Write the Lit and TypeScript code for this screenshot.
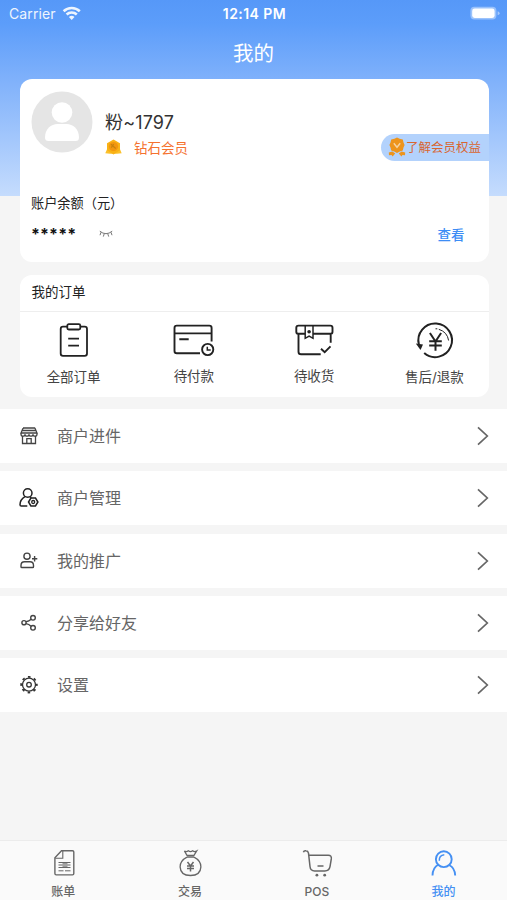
import { LitElement, html, svg, css } from "lit";
import { customElement, property } from "lit/decorators.js";

type Glyph = { w: number; h: number; art: unknown };

const glyphs: Record<string, Glyph> = {
  wifi: {
    w: 20, h: 16,
    art: svg`<g fill="none" stroke="#fff" stroke-width="2.6"><path d="M1.6 5.2a11.8 11.8 0 0 1 16.2 0"/><path d="M4.6 8.500a7.4 7.4 0 0 1 10.2 0"/></g><path fill="#fff" d="M9.7 14 6.9 11.1a4.1 4.1 0 0 1 5.6 0z"/>`,
  },
  battery: {
    w: 30, h: 16,
    art: svg`<rect x=".4" y=".8" width="26" height="12.8" rx="4" fill="#fff" opacity=".4"/><rect x="2.2" y="2.5" width="22.400" height="9.400" rx="2.400" fill="#fff"/><path d="M27.600 5.200v4q2-.6 2-2t-2-2" fill="#fff" opacity=".45"/>`,
  },
  avatar: {
    w: 62, h: 62,
    art: svg`<circle cx="31" cy="31" r="30.5" fill="#e5e5e5"/><circle cx="31" cy="21.5" r="10.3" fill="#fff"/><path fill="#fff" d="M14 46.5c0-8.5 6-13.5 12.500-13.500h9c6.500 0 12.500 5 12.500 13.500q0 3.500-3.500 3.500h-27q-3.500 0-3.500-3.500z"/>`,
  },
  medal: {
    w: 17, h: 16,
    art: svg`<path fill="#fbc12c" d="M3 8 .3 14.200l4.700.6h7l4.700-.6L14 8"/><path fill="#f9b216" d="M8.500 .6 15 4.200v7L8.500 15.600 2 11.200v-7z"/><circle cx="8.500" cy="7.500" r="4.600" fill="#f2960f"/><path d="M6 5.300l4.700 4.200M6.300 8.600l2.400-3.400" stroke="#c8820c" stroke-width="1.200" fill="none"/>`,
  },
  award: {
    w: 18, h: 20,
    art: svg`<path fill="#ed941c" d="M9 .6 11.600 1.800l3.200.8.700 2.800 1.100 2.600-1.100 2.600-.7 3-3 .9L9 16l-2.800-1.500-3-.9-.7-3L1.400 8l1.100-2.600.7-2.800 3.200-.8z"/><path fill="#ed941c" d="M.8 15.500l3.600-1 2.800 2-2.600 3-1.100-1.500-2.500.2zM17.200 15.500l-3.600-1-2.800 2 2.600 3 1.100-1.500 2.500.2z"/><path d="M5.800 6.300 9 10.300l3.200-4" stroke="#f6d3a2" stroke-width="1.400" fill="none"/>`,
  },
  lashes: {
    w: 14, h: 8,
    art: svg`<path d="M.8 1.200Q7 6.200 13.200 1.200M2 2.300 1 5.200M5.200 3.900 4.300 6.600M8.800 3.900l.9 2.700M12 2.300 13 5.200" stroke="#666" stroke-width=".9" fill="none"/>`,
  },
  orders: {
    w: 40, h: 40,
    art: svg`<g fill="none" stroke="#222" stroke-width="1.8"><path d="M13 6.700H9q-2.300 0-2.300 2.300v24.500q0 2.300 2.300 2.300h21.700q2.300 0 2.300-2.300V9q0-2.300-2.300-2.300h-4.400"/><rect x="13.300" y="4.200" width="13" height="5.300" rx="1.500"/><path d="M14.200 18.700H25M14.200 25.700H25"/></g>`,
  },
  pay: {
    w: 48, h: 40,
    art: svg`<g fill="none" stroke="#222" stroke-width="1.900"><path d="M30 33.200H6.800q-2.300 0-2.300-2.300V7.900q0-2.300 2.300-2.300h32.500q2.300 0 2.300 2.300v13.500M4.500 13.400h37M9.300 19.200h9.400"/><circle cx="37.700" cy="29.500" r="5.600"/><path d="M37.300 26.700v3.300h3.400" stroke-width="1.500"/></g>`,
  },
  receive: {
    w: 48, h: 40,
    art: svg`<g fill="none" stroke="#222" stroke-width="1.900"><path d="M15 13.700H8q-1.700 0-1.700-2V7.800q0-2.200 2.200-2.200h31.800q2.200 0 2.200 2.200v3.900q0 2-1.700 2H23M8.500 13.700v18q0 2.600 2.600 2.600h19.600M40.700 13.700v9"/><path d="M15.200 5.600v12.700l3.900-2.300 3.900 2.300V5.600" stroke-width="1.500"/><path d="M31 28.700l3.700 3.500 5.800-5.800"/></g><circle cx="19.100" cy="11.800" r="1.800" fill="#222"/>`,
  },
  refund: {
    w: 50, h: 40,
    art: svg`<g fill="none" stroke="#222" stroke-width="2"><path d="M9.900 24.500A16.800 16.800 0 1 1 15.200 33"/><path d="M20.900 13 26.500 21.500l5.600-8.500M26.500 21.500V30.800M20.200 21.300h12.600M20.200 25.500h12.600"/><path d="M29.800 9.300Q38.300 12 39.600 20.500" stroke-width="1"/><path d="M26.500 8.800h1.800" stroke-width="1"/></g><path fill="#222" d="M6.800 23.500l7.200.9-2.500 5.600z"/>`,
  },
  store: {
    w: 20, h: 20,
    art: svg`<g fill="none" stroke="#444" stroke-width="1.300"><path d="M4 2h12.200M4 2.200 2 7h16l-2-4.800M3.400 4.500h13.200M2 7v1.300q0 1.900 2 1.900t2-1.900q0 1.900 2 1.900t2-1.900q0 1.900 2 1.900t2-1.900q0 1.900 2 1.900t2-1.900V7M3.500 10v7.500h13V10M7.800 17.500v-4.800h4.400v4.800"/></g>`,
  },
  manage: {
    w: 22, h: 22,
    art: svg`<g fill="none" stroke="#222" stroke-width="1.500"><circle cx="9.700" cy="6" r="4.300"/><path d="M7 9.600Q2 12.500 2 17.700q0 1.300 1.300 1.300h6M12 9.800l1.300.9"/><path d="M12.900 11h4.600l2.400 4-2.400 4h-4.600l-2.400-4z" stroke-width="1.500"/><circle cx="15.200" cy="15" r="1.500" stroke-width="1.300"/></g>`,
  },
  promote: {
    w: 20, h: 20,
    art: svg`<g fill="none" stroke="#444" stroke-width="1.400"><circle cx="8" cy="5.200" r="3.100"/><path d="M2 15.700v-1.300q0-3.700 3.500-3.700h5.500q3.500 0 3.500 3.700v1.300q0 .8-.8.800H2.800q-.8 0-.8-.8zM13 7.800h5.300M15.600 5.100v5.400"/></g>`,
  },
  share: {
    w: 20, h: 20,
    art: svg`<g fill="none" stroke="#444" stroke-width="1.400"><circle cx="5" cy="9.700" r="2.100"/><circle cx="14" cy="4.800" r="2.300"/><circle cx="14" cy="14.800" r="2.300"/><path d="M7 8.800Q10 8.500 12.200 6.300M7 10.600q3 .4 5 2.700"/></g>`,
  },
  settings: {
    w: 20, h: 20,
    art: svg`<g fill="none" stroke="#333"><circle cx="10" cy="9.700" r="6.500" stroke-width="1.300"/><circle cx="10" cy="9.700" r="7.800" stroke-width="1.800" stroke-dasharray="2.600 3.526" stroke-dashoffset="1.300"/><circle cx="10" cy="9.700" r="2.300" stroke-width="1.300"/></g>`,
  },
  chevron: {
    w: 12, h: 20,
    art: svg`<path d="M1 1.300 10.300 10 1 18.700" fill="none" stroke="#666" stroke-width="1.700"/>`,
  },
  bill: {
    w: 30, h: 30,
    art: svg`<g fill="none" stroke="#666" stroke-width="1.400"><path d="M13.500 2.800h11q1.300 0 1.300 1.300v21.500q0 1.300-1.300 1.300H8.200q-1.300 0-1.300-1.300V9.800z"/><path d="M14.800 3v7.200H7.200" stroke-width="1.100"/><path d="M10.500 14.500h12M10.500 17h12M10.500 19.500h12M10.500 22.800h5M17 22.800h5.500" stroke-width="1"/><path d="M14.500 15.700h5M14.500 18.300h5" stroke="#999"/></g>`,
  },
  trade: {
    w: 30, h: 30,
    art: svg`<g fill="none" stroke="#666" stroke-width="1.300"><path d="M12 7.300 9.400 3q2 1.200 3.900-.2 2.200 1.500 4.400 0 1.800 1.400 3.900.2L19 7.300zM12 9h7"/><path d="M12 9.200Q5.100 12.800 5.100 18.900 5.500 27.500 15.500 27.500t10.400-8.600Q25.900 12.800 19 9.200"/><path d="M12.500 14l3 4 3-4M15.500 18v5.500M12 18h7M12 20.500h7" stroke-width="1.500"/></g>`,
  },
  cart: {
    w: 32, h: 30,
    art: svg`<g fill="none" stroke="#666" stroke-width="1.500"><path d="M2.400 4.300Q2.900 2.300 5 2.700q2 .2 2.500 2.400L9 18.500q.4 4.400 4.600 4.400h10.200q4.400 0 5.200-4.300l1.300-7.700q.5-3.700-3-3.700H8"/><path d="M16.500 18h6"/></g><circle cx="15.900" cy="27.200" r="1.400" fill="#666"/><circle cx="23.700" cy="27.200" r="1.400" fill="#666"/>`,
  },
  me: {
    w: 30, h: 30,
    art: svg`<g fill="none" stroke="#4590f3" stroke-width="1.900"><circle cx="14.800" cy="11.200" r="7.900"/><path d="M9.500 16.500Q3.700 19.500 3.500 27.500M20 17q5.800 2.500 6.200 10.500"/><path d="M10.300 12.700Q10 7.200 15.300 6.700" stroke-width="1.500"/></g>`,
  },
};

@customElement("line-icon")
class LineIcon extends LitElement {
  @property() name = "";
  static styles = css`
    :host { display: block; flex: none; }
    .art { display: block; }
  `;
  render() {
    const g = glyphs[this.name];
    return html`<svg class="art" width=${g.w} height=${g.h} viewBox="0 0 ${g.w} ${g.h}">${g.art}</svg>`;
  }
}

const orders = [
  { icon: "orders", label: "全部订单", low: true },
  { icon: "pay", label: "待付款", low: false },
  { icon: "receive", label: "待收货", low: false },
  { icon: "refund", label: "售后/退款", low: true },
];

const menu = [
  { icon: "store", label: "商户进件" },
  { icon: "manage", label: "商户管理" },
  { icon: "promote", label: "我的推广" },
  { icon: "share", label: "分享给好友" },
  { icon: "settings", label: "设置" },
];

const tabs = [
  { icon: "bill", label: "账单" },
  { icon: "trade", label: "交易" },
  { icon: "cart", label: "POS" },
  { icon: "me", label: "我的" },
];

@customElement("app-root")
class AppRoot extends LitElement {
  static styles = css`
    :host {
      display: flex;
      flex-direction: column;
      height: 900px;
      box-sizing: border-box;
      background: linear-gradient(#5698f8 0, #5c9dfa 12%, #81b2fb 42%, #c5dcfd 100%) 0 0 / 100% 196px no-repeat #f5f5f5;
      font-family: Inter, "Noto Sans CJK SC", sans-serif;
      color: #333;
      white-space: nowrap;
    }
    .status {
      display: grid;
      grid-template-columns: 1fr auto 1fr;
      align-items: center;
      height: 27px;
      padding: 0 7px 0 9px;
      box-sizing: border-box;
      color: #fff;
      font-size: 14px;
    }
    .carrier { display: flex; align-items: center; gap: 6px; opacity: .9; letter-spacing: .1px; }
    .clock { font-weight: 600; font-size: 14px; letter-spacing: .45px; }
    .power { justify-self: end; }
    .title {
      height: 52px;
      line-height: 53px;
      text-align: center;
      color: #fff;
      font-size: 20.500px;
    }
    .card { margin: 0 18.500px 0 19.500px; background: #fff; border-radius: 12px; }
    .account { height: 183px; padding: 12px 0 0 11.500px; box-sizing: border-box; }
    .profile { display: flex; }
    .who { margin: 18px 0 0 12px; flex: 1; }
    .name { font-size: 18px; line-height: 27px; letter-spacing: .15px; }
    .vip { display: flex; align-items: center; height: 21px; gap: 12px; color: #f5722f; font-size: 13.500px; }
    .rights {
      display: flex;
      align-items: center;
      box-sizing: border-box;
      width: 108px;
      height: 27px;
      margin-top: 42.500px;
      padding: 0 0 1px 7.500px;
      border-radius: 13.500px 0 0 13.500px;
      background: #b3d2fc;
      color: #d9652f;
      font-size: 12.500px;
    }
    .balance { margin-top: 30px; height: 24px; line-height: 24px; font-size: 13.200px; color: #222; }
    .amount { display: flex; align-items: center; margin-top: 7px; height: 24px; padding-right: 24px; font-size: 13.500px; }
    .mask { width: 68px; font-size: 16px; font-weight: 700; letter-spacing: .1px; line-height: 20px; color: #111; }
    .check { margin-left: auto; color: #3d8df5; font-weight: 500; }
    .orders { margin-top: 13px; height: 122px; overflow: hidden; }
    .heading { height: 36px; line-height: 35px; padding-left: 12px; border-bottom: 1px solid #eee; font-size: 13.500px; color: #222; }
    .grid { display: grid; grid-template-columns: repeat(4, 1fr); margin: 0 -6px; padding-top: 8px; }
    .order { display: flex; flex-direction: column; align-items: center; font-size: 13.500px; line-height: 20px; color: #444; }
    .label { margin-top: 6px; }
    .low { margin-top: 7px; }
    .menu { display: flex; flex-direction: column; gap: 8.300px; margin-top: 12px; }
    .row { display: flex; align-items: center; height: 54px; padding: 0 18px; background: #fff; font-size: 16px; color: #666; }
    .lead { width: 22px; display: flex; justify-content: center; }
    .text { flex: 1; margin-left: 17px; padding-bottom: 2px; }
    .tabs {
      display: grid;
      grid-template-columns: repeat(4, 1fr);
      height: 60px;
      box-sizing: border-box;
      border-top: 1px solid #ececec;
      margin-top: auto;
      background: #fafafa;
    }
    .tab { display: flex; flex-direction: column; align-items: center; padding-top: 7px; color: #666; font-size: 12px; line-height: 16px; font-weight: 500; }
    .tablabel { margin-top: 6px; }
    .active { color: #4590f3; }
  `;

  render() {
    return html`
      <header class="status">
        <span class="carrier">Carrier<line-icon name="wifi"></line-icon></span>
        <span class="clock">12:14 PM</span>
        <line-icon class="power" name="battery"></line-icon>
      </header>
      <div class="title">我的</div>
      <section class="card account">
        <div class="profile">
          <line-icon name="avatar"></line-icon>
          <div class="who">
            <div class="name">粉~1797</div>
            <div class="vip"><line-icon name="medal"></line-icon>钻石会员</div>
          </div>
          <div class="rights"><line-icon name="award"></line-icon>了解会员权益</div>
        </div>
        <div class="balance">账户余额（元）</div>
        <div class="amount">
          <span class="mask">*****</span><line-icon name="lashes"></line-icon>
          <span class="check">查看</span>
        </div>
      </section>
      <section class="card orders">
        <div class="heading">我的订单</div>
        <div class="grid">
          ${orders.map((o) => html`<div class="order"><line-icon name=${o.icon}></line-icon><span class="label ${o.low ? "low" : ""}">${o.label}</span></div>`)}
        </div>
      </section>
      <nav class="menu">
        ${menu.map((m) => html`<div class="row"><span class="lead"><line-icon name=${m.icon}></line-icon></span><span class="text">${m.label}</span><line-icon name="chevron"></line-icon></div>`)}
      </nav>
      <footer class="tabs">
        ${tabs.map((t, i) => html`<div class="tab ${i === 3 ? "active" : ""}"><line-icon name=${t.icon}></line-icon><span class="tablabel">${t.label}</span></div>`)}
      </footer>
    `;
  }
}
